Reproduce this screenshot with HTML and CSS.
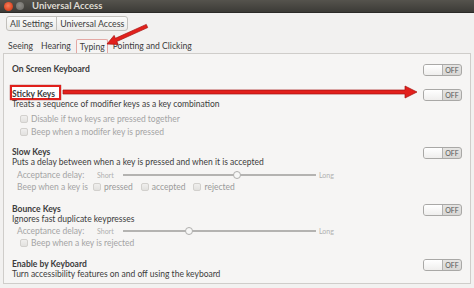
FILE: index.html
```html
<!DOCTYPE html>
<html>
<head>
<meta charset="utf-8">
<link rel="stylesheet" href="styles.css">
</head>
<body>
<div class="window">
  <div class="titlebar"><div class="wbtns"><span class="wbtn wclose"></span><span class="wbtn wmin"></span></div><div class="wtitle">Universal Access</div></div>
  <div class="toolbar">
    <div class="crumbs"><span class="crumb">All Settings</span><span class="crumb">Universal Access</span></div>
  </div>
  <div class="tabs">
    <span class="tab">Seeing</span><span class="tab">Hearing</span><span class="tab active">Typing</span><span class="tab">Pointing and Clicking</span>
  </div>
  <div class="panel">
    <div class="sec osk">
      <div class="info"><div class="stitle">On Screen Keyboard</div></div>
      <div class="switch"><span class="knob"></span><span class="off">OFF</span></div>
    </div>
    <div class="sec sticky">
      <div class="info">
        <div class="stitle"><span class="hl">Sticky Keys</span></div>
        <div class="desc">Treats a sequence of modifier keys as a key combination</div>
        <div class="subs">
          <div class="cbrow"><span class="cb"></span>Disable if two keys are pressed together</div>
          <div class="cbrow"><span class="cb"></span>Beep when a modifer key is pressed</div>
        </div>
      </div>
      <div class="switch"><span class="knob"></span><span class="off">OFF</span></div>
    </div>
    <div class="sec slow">
      <div class="info">
        <div class="stitle">Slow Keys</div>
        <div class="desc">Puts a delay between when a key is pressed and when it is accepted</div>
        <div class="subs">
          <div class="slider"><span class="slabel">Acceptance delay:</span><span class="short">Short</span><span class="track"><span class="thumb" style="left:59%"></span></span><span class="long">Long</span></div>
          <div class="beep"><span class="blabel">Beep when a key is</span><span class="cb"></span><span class="opt">pressed</span><span class="cb"></span><span class="opt">accepted</span><span class="cb"></span><span class="opt">rejected</span></div>
        </div>
      </div>
      <div class="switch"><span class="knob"></span><span class="off">OFF</span></div>
    </div>
    <div class="sec bounce">
      <div class="info">
        <div class="stitle">Bounce Keys</div>
        <div class="desc">Ignores fast duplicate keypresses</div>
        <div class="subs">
          <div class="slider"><span class="slabel">Acceptance delay:</span><span class="short">Short</span><span class="track"><span class="thumb" style="left:34%"></span></span><span class="long">Long</span></div>
          <div class="cbrow short-row"><span class="cb"></span>Beep when a key is rejected</div>
        </div>
      </div>
      <div class="switch"><span class="knob"></span><span class="off">OFF</span></div>
    </div>
    <div class="sec enable">
      <div class="info">
        <div class="stitle">Enable by Keyboard</div>
        <div class="desc">Turn accessibility features on and off using the keyboard</div>
      </div>
      <div class="switch"><span class="knob"></span><span class="off">OFF</span></div>
    </div>
  </div>
  <svg class="annot" width="474" height="288" viewBox="0 0 474 288">
    <path d="M146.3,24.4 L115.4,38.3 L114.1,35.4 L107,44 L118.2,44.5 L116.8,41.5 L147.7,27.6 Z" fill="#e2201c" stroke="#a5110e" stroke-width="0.7"/>
    <path d="M63,90 L405,90 L405,86 L417,92 L405,98 L405,94 L63,94 Z" fill="#e2201c" stroke="#a5110e" stroke-width="0.7"/>
  </svg>
</div>
</body>
</html>
```
FILE: styles.css
```css
* { box-sizing: border-box; }
html, body { margin: 0; padding: 0; }
body {
  width: 474px;
  height: 288px;
  overflow: hidden;
  background: #f2f1f0;
  font-family: Lato, "DejaVu Sans", sans-serif;
  font-size: 8.5px;
  color: #3c3c3c;
}
.window { position: relative; width: 474px; height: 288px; }
.titlebar {
  height: 13px;
  background: linear-gradient(#55534d, #3c3b37);
  display: flex;
  align-items: center;
  border-bottom: 1px solid #2c2b28;
}
.wbtns { width: 32px; flex: none; display: flex; align-items: center; gap: 3px; padding-left: 4px; }
.wbtn { display: block; border-radius: 50%; flex: none; }
.wclose { width: 9px; height: 9px; background: radial-gradient(circle at 45% 40%, #f57e5c, #df4a25 60%, #b8351a); }
.wmin { width: 8px; height: 8px; background: radial-gradient(circle at 45% 40%, #8e8c87, #6a6863); }
.wtitle { flex: none; color: #dfdbd2; font-weight: bold; font-size: 9.5px; line-height: 12px; }
.toolbar { height: 24px; padding: 3px 0 0 6px; }
.crumbs {
  display: inline-flex;
  height: 15px;
  border: 1px solid #c2c0bc;
  border-radius: 3px;
  background: linear-gradient(#fbfbfa, #ecebe9);
}
.crumb { padding: 0 3px; display: flex; align-items: center; color: #3c3c3c; font-size: 8.8px; }
.crumb + .crumb { border-left: 1px solid #c2c0bc; }
.tabs { height: 16px; display: flex; align-items: flex-end; padding-left: 5px; }
.tab { height: 14px; padding: 0 3px; display: flex; align-items: center; margin-right: 2px; color: #3c3c3c; font-size: 8.6px; }
.tab.active {
  background: #f6f5f4;
  border: 1px solid #e4a8a4;
  border-bottom: none;
  border-radius: 2px 2px 0 0;
  padding: 0 2px 0 3px;
}
.panel {
  margin: 0 3px;
  height: 231px;
  background: #f6f5f4;
  border: 1px solid #cfcdca;
  padding: 10px 8px 0 8px;
  display: flex;
  flex-direction: column;
}
.sec { display: flex; justify-content: space-between; align-items: flex-start; }
.osk { margin-bottom: 13px; }
.sticky { margin-bottom: 9px; }
.slow { margin-bottom: 11px; }
.bounce { margin-bottom: 10px; }
.info { display: flex; flex-direction: column; }
.stitle { font-weight: bold; line-height: 10px; height: 10px; }
.desc { line-height: 10px; height: 10px; }
.hl { position: relative; z-index: 1; }
.hl::before {
  content: "";
  position: absolute;
  left: -2px; right: -6px; top: -4px; bottom: -1px;
  background: #fff;
  border: 2px solid #e0201c;
  box-shadow: 0 0 1px #8a0c0a;
  z-index: -1;
}
.subs { padding-top: 3px; }
.slow .subs { padding-top: 2px; }
.bounce .subs { padding-top: 1px; }
.cbrow { height: 13px; display: flex; align-items: center; padding-left: 8px; color: #a4a4a4; }
.cbrow.short-row { height: 12px; }
.cb {
  width: 8px; height: 8px;
  border: 1px solid #d2d0cd;
  border-radius: 2px;
  background: linear-gradient(#f0efee, #e2e1df);
  margin-right: 3px;
  flex: none;
}
.slider { height: 12px; display: flex; align-items: center; padding-left: 5px; color: #a4a4a4; }
.slabel { width: 80px; }
.short, .long { font-size: 7px; color: #b0b0b0; }
.short { width: 26px; }
.track { position: relative; width: 193px; height: 2px; background: #b4b3b1; margin-right: 3px; }
.thumb {
  position: absolute; top: -3px;
  width: 8px; height: 8px; margin-left: -4px;
  border-radius: 50%;
  border: 1px solid #b0afad;
  background: #f7f7f6;
}
.beep { height: 12px; display: flex; align-items: center; padding-left: 5px; color: #a4a4a4; }
.blabel { width: 76px; flex: none; }
.opt { margin-right: 8px; color: #9a9a9a; }
.switch {
  width: 39px; height: 12px;
  border: 1px solid #a9a8a6;
  border-radius: 3px;
  display: flex;
  background: linear-gradient(#e6e5e3, #d8d7d5);
  overflow: hidden;
  flex: none;
}
.knob { width: 19px; background: linear-gradient(#ffffff, #efeeed); border-right: 1px solid #b3b2b0; }
.off { flex: 1; display: flex; align-items: center; justify-content: center; font-size: 7px; color: #555; }
.annot { position: absolute; left: 0; top: 0; pointer-events: none; z-index: 5; }
```
